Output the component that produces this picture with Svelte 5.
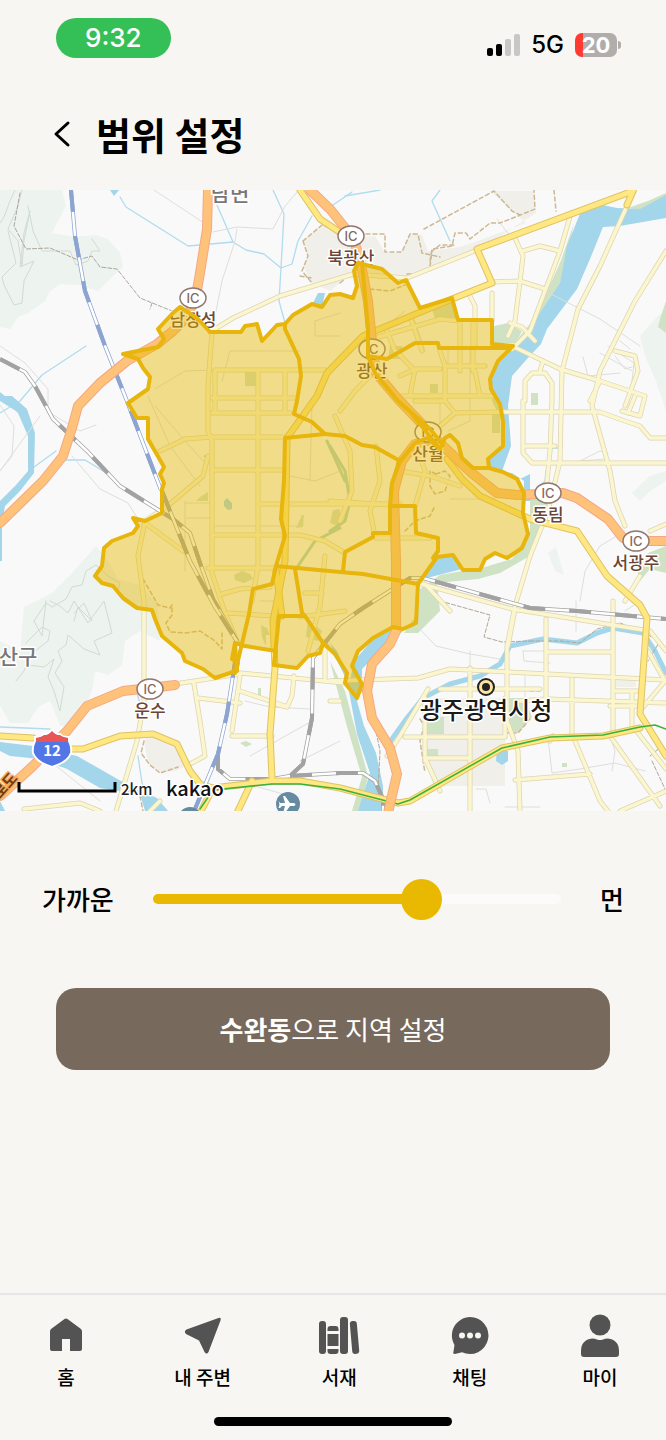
<script>
  let distance = $state(27);
  const maxDistance = 40;
  const filled = $derived(5 + (distance / maxDistance) * 90);

  const hills = [
    'M0 189H62L66 205 58 220 52 232 75 236 96 234 108 238 120 252 123 266 112 276 98 290 78 284 60 283 50 290 45 300 28 312 18 316 10 328 0 326Z',
    'M20 650L24 606 52 592 74 570 96 545 108 560 118 578 140 584 158 604 160 640 140 630 125 640 122 664 108 674 95 670 92 690 82 712 70 730 60 724 50 700 38 706 28 722 10 722 0 704V640Z',
    'M640 335L655 318 666 308V410L656 380 645 355Z',
    'M632 492L650 475 666 470V480L650 490 640 500Z',
    'M548 552L556 546 560 560 564 574 555 570Z'
  ];

  const contours = [
    'M15 189L10 200 4 216 0 222M22 189L18 205 8 228 18 240 22 265 24 240 30 210 24 232 20 266 34 260 24 280 22 302 14 304 4 284 2 276 16 262 8 230',
    'M28 205L33 230 42 250 70 250 76 264 88 260 92 250 100 250 92 238',
    'M34 620L46 602 52 606 66 598 72 586 82 584 86 570 96 564 108 575 120 582 117 592 124 600M74 612L84 602 92 620 78 606 74 620',
    'M34 620L42 635 46 600M26 642L34 634 42 626 50 630 48 640 30 654 24 670 16 680M50 600L60 605 68 612 74 600 88 622 104 600 112 632 94 640 100 654 84 648 68 634 66 644 58 650 62 660 55 672 64 686 60 710 54 690 48 676 54 658 44 666 28 664'
  ];

  const parks = [
    'M574 222L568 250 560 282 545 318 527 352 516 340 534 318 548 288 560 262 572 228Z',
    'M628 207L648 200 666 192V200L640 209Z',
    'M494 325L508 322 522 330 516 342 494 343Z',
    'M531 392H538V404H531Z',
    'M660 318L666 300V332L658 326Z',
    'M530 492L548 502 538 535 528 556 500 572 478 578 437 582 440 610 418 632 404 632 418 612 420 588 440 574 485 566 512 558 530 530Z',
    'M648 552L666 545V572L650 568 640 580 636 566Z',
    'M425 716H444V733H425ZM427 748H438V756H427Z',
    'M507 697H524L532 716 518 732 504 728Z',
    'M562 762h5v4h-5zM258 687h3v8h-3zM240 742l6-2 6 3-6 3z',
    'M330 660L345 690 353 720 368 775 360 810 352 810 362 776 346 722 335 680Z',
    'M245 371H256V385H245ZM200 496L208 491V500H196ZM302 514H304L303 526 296 527ZM333 509L340 508V526L330 522Z',
    'M234 574L242 570 250 573 253 578 244 582 235 579Z',
    'M430 303L450 298 458 318 436 320ZM390 345H402V358H388Z',
    'M492 412L500 410V432H492ZM430 383H438V392H430Z',
    'M490 388L496 400 502 405 502 420 492 400Z',
    'M261 624L267 627 270 634 266 634V645L262 636ZM308 618L322 630 318 640 306 636Z'
  ];

  const plots = [
    'M303 240L322 224 345 238 375 235 385 252 402 252 410 232 422 234 428 250 460 246 478 240 526 222 490 190H534L536 212 520 222 478 250 440 266 407 276 380 274 345 278 330 290 312 282 303 265 308 255Z',
    'M424 697H505V785H434L424 758Z',
    'M144 740L150 733 176 745 186 765 175 770 160 772 148 762Z',
    'M612 679h24v7h-24z'
  ];

  const river = [
    'M583 205L598 203 617 207 640 208 666 194V217L620 225 603 226 590 258 577 288 547 328 541 343 527 358 512 375 508 405 511 445 502 470 520 478 530 473V500L524 500 524 480 512 472 493 470 488 460 503 445 502 403 490 385 493 368 512 348 530 332 538 315 560 282 567 245Z',
    'M437 556L453 554 462 568 427 577 418 583 426 570Z',
    'M394 628L403 630 380 650 362 668 362 690 357 700 364 725 376 752 383 785 383 810H358L370 772 357 733 347 680 335 655 330 642 337 650 350 680 354 660 374 637Z',
    'M0 395L12 395 27 408 35 432 34 472 20 490 5 505 2 522V560H0V500L16 484 28 470 28 435 18 412Z',
    'M0 391L12 401 16 410 0 400Z',
    'M0 741L33 745 77 755 100 768 133 787 157 797 168 810H145L140 793 100 787 67 768 40 758 10 755 0 750Z',
    'M0 800L5 810H0Z',
    'M497 748L508 750V760L502 764 496 760Z',
    'M312 304L318 292 325 292 322 306Z',
    'M110 189H119L114 195Z',
    'M203 455L208 453V458ZM224 500l3-3 5 5v6l-4 1-4-4z'
  ];

  const innerStreams = ['M327 440L345 480M340 527L315 540 298 565', 'M330 445L345 470 350 500 345 520 330 530'];

  const streams = [
    'M120 196L126 206 188 245 233 241 246 249 264 253 281 267 292 263 298 240 312 215',
    'M217 204L233 241M273 189L284 213 281 267 279 300 285 322',
    'M86 345L42 374 20 400M0 412L20 400M34 466L56 450M66 459H85L108 473M330 206L352 191M440 189L432 200 450 240M546 470L545 480 535 490M550 447H560',
    'M380 189L345 195M137 692L142 710 136 740M138 755L142 782 150 805M327 642L345 672M0 726L50 728'
  ];

  const tributary =
    'M387 745L407 717 423 697 450 683 480 675 500 663 510 645 543 638 577 642 597 632 613 627 643 632 655 650 666 672';

  const lanes = [
    'M154 189L204 222M213 231L237 226 273 228 285 205 298 190M237 228L235 240 222 280 215 315',
    'M0 345L25 362 48 388 48 410M40 415L0 470M0 404L14 425 12 455 0 470M50 412L80 430 96 424M72 455L100 488 128 502 138 518',
    'M497 218L510 235M545 290L600 318 640 345M583 356L588 375 620 372M600 352L632 370M608 345L634 362 632 380M620 340L630 348M615 355L625 368 632 366',
    'M580 460L600 450 608 452 606 458 580 460M580 600L585 570 600 545 625 530M412 620L436 645 470 653 500 658M523 650L524 660 550 662M523 650H550',
    'M470 650V670M525 675V700H538M548 737L552 772 580 768 615 762 645 770M476 788H486L490 802M505 806H540M610 735L615 750 612 770M640 600L625 610',
    'M245 700L270 706 310 708M250 755L312 720M50 760L100 800M255 785L290 795 300 806M576 600V630',
    'M230 350H300M230 350L222 380M155 388L185 370 215 369M155 405L185 440 205 462M148 395L170 445 200 485M185 502H212M185 517H212M185 500V570',
    'M312 400L310 480M290 475L315 480 340 470M215 525H300M315 320L340 312M315 320V335H340M260 600H275M340 740L300 760',
    'M440 400V430M448 365V345M470 348V420M395 318L405 310M412 312L425 350M450 498H480M448 430L470 420'
  ];

  const mountainPaths = [
    'M20 192L14 225 26 248 50 247 78 259 92 255 100 266 117 268 140 297 172 310M152 302L150 308',
    'M440 600L490 614 484 636 502 641 530 640M530 640L560 640 580 642 597 628 620 622 640 630 660 640 648 660',
    'M650 755L662 745M652 760L666 790M370 690L374 720 380 750 378 790'
  ];

  const borders = [
    'M303 240L322 224 332 228M303 240L308 255 302 270 312 282M300 275L312 277M340 282L345 278',
    'M345 233H385V251H402L410 233H418L422 252 440 256M430 260L432 248 452 245 455 232H466L470 238 490 222 500 222 518 215 535 208 534 189M424 228L494 190 512 210 520 214M554 189L556 210',
    'M370 288L390 290 405 284M407 273H416M430 265L432 250 440 244 455 244',
    'M143 578L150 590 158 604 170 607 172 604V614L166 622 170 631 185 632 200 630 215 640 222 648 222 632',
    'M436 473L445 470 450 475 445 490 435 493 430 485 430 470ZM405 530L415 520 430 515 435 505',
    'M420 718L424 725 420 740 425 772M505 732L518 732 530 718M530 690H540M144 740L141 752 150 764 160 772 178 766M140 795L143 810'
  ];

  const paleRoads = [
    'M210 331L233 317 280 295 340 277 353 273 407 277 477 249',
    'M212 331L208 385V430L212 440V572L225 612 237 640',
    'M258 369V565L252 600M285 369V410M215 369V410M215 369H325M212 397H295M212 412H290M212 436H284M212 469H284M260 503H400M212 534H300L325 540 345 552M208 567H278',
    'M212 436L185 438 160 450M208 455L203 475 170 503M170 503L145 520 138 555 144 600V700L137 740 122 790 116 810M145 522L183 550',
    'M222 593L240 588 270 586M228 612L275 615M325 555L320 605 308 650M305 592H322M345 610L300 616',
    'M571 212L560 250 545 290 530 330 512 348M515 237L523 255 520 280 515 320 508 335M523 250L540 245 560 250M493 281L520 280 545 288M492 292V320M470 295L475 305V343M510 322L522 326 535 340',
    'M627 205L600 265 578 308 562 370 560 460 548 510 530 555 515 605 507 645V720L518 750 520 810M666 250L635 300 600 370 592 405 610 470 615 500 625 525M512 345L560 368 600 380 645 395 640 415 622 410',
    'M523 400V452L532 462H666M552 400L550 450 545 500M525 445H555M500 411H600L625 420 640 425 650 437H666M525 400V380L532 372H545L552 382V400M540 370L543 360M635 395L628 412M615 350L635 355 638 370 625 405M600 380L590 400',
    'M418 582L512 608 575 618 650 630 666 650M625 600L640 575M650 530L666 523M613 600V730M546 618V700M548 651H613M508 645L515 608',
    'M330 680L418 677 450 668 666 679M520 700L546 698 665 702M572 678V735M428 688L400 735 387 755M470 667V810M440 688H540M425 697V760M405 736H505M425 757H470M425 757L440 790M505 697V735M573 735L600 800 608 810M515 779L590 773M610 735L660 805M635 728L666 768M632 690V728M615 690H637M610 705H640M648 650L665 680 640 710M666 790L620 810',
    'M240 672L345 682M175 683L240 673M194 683L200 720 205 755 190 763M198 697L240 702M240 675L232 730M232 735H272M240 690L285 705M294 675L292 695 287 706 275 703M325 640V680M24 808L80 802 100 810M150 810L160 800',
    'M385 325L395 350M365 340L440 318 460 320M410 315L422 350M460 320V370M473 320V370M440 350L445 365H485M400 375L415 368H440M400 395H495M445 365V400M415 368L410 395M396 350L415 370M475 370L480 395M340 410L355 390 370 375M335 415L350 450 352 490 340 520',
    'M330 500L390 504M376 445L380 480 370 510 375 535M415 400L445 400 455 412 500 411M455 412L440 425M400 470L430 475 460 485M418 450L425 470 415 505M376 537H430',
    'M450 610L425 583M340 700L330 700M550 740L553 735M340 680H330'
  ];

  const yellowRoads = [
    'M633 190L477 248 492 282 452 298 363 335 327 372 317 395 287 437 285 560 273 620 275 667 270 733 272 777',
    'M633 190L627 204',
    'M300 189L320 218 338 230 353 240',
    'M447 458L462 478 480 495 530 518 577 530 607 575 640 604 647 617 640 713 666 755',
    'M0 735L33 737M60 748H83L120 735 153 733 177 743 190 770 200 783 213 787 272 780 300 780 340 787 398 802 410 800 502 747 550 737 603 735 640 727',
    'M252 780L237 812M213 787L200 812M276 570L282 615'
  ];

  const expressways = [
    'M208 189L207 228 200 272 196 295 188 315 173 330 157 343 127 360 100 382 78 405 72 427 63 455 43 480 0 522',
    'M310 189L330 208 353 237 360 258 368 300 372 340 376 372 398 398 443 445 473 473 497 492 517 494 563 492 577 497 608 518 623 537 650 540H666',
    'M427 440L415 443 402 460 394 490 396 560V630L390 643 372 663 367 690 372 717 390 747 397 773 388 812',
    'M175 684L150 687 123 690 87 705 67 730 33 765 0 795'
  ];

  const greyRails = [
    'M0 358L25 371 35 385 53 418 87 450 120 485 160 510 173 518 190 532 200 562 213 598 237 640',
    'M162 490L172 515 190 560 215 606 238 642',
    'M218 753V768L230 778H272L290 775 303 763 312 717 313 657 340 623 363 607 410 577 423 577 487 595 530 607 577 610 666 618',
    'M290 775L340 772 363 772 375 780 383 798V812'
  ];
  const blueRails = ['M71 189L75 235 85 290 105 345 125 395 161 489', 'M236 655L227 713 218 753 195 808'];

  const subway = 'M200 808L213 789 272 783 300 783 340 788 398 803 410 799 502 747 550 736 603 734 640 726 655 724 666 728';

  const region =
    'M358 262L382 268 398 282 406 279 420 307 452 297 458 319H492V343L513 345 498 360 490 378 491 388 500 403 503 420V445L488 458 489 467 503 471 517 478 524 492 523 512 528 533 522 547 507 557 495 552 485 558 480 569H463L453 554 437 556 418 583 416 622 403 628 393 626 373 637 358 650 352 665 362 683 357 697 345 682 347 672 335 653 323 642 320 652 308 655 297 667 274 664 276 650 245 645 235 642 232 658 238 662 236 670 230 672 215 677 203 668 185 660 182 652 162 635 155 618 152 609 137 607 123 597 113 585 102 582 95 575 102 565 104 547 112 540 133 532 138 525 133 517 145 520 162 512V488L164 482 160 473 164 466 148 438V417H137L128 402 148 388 150 376 143 367 138 358 123 353 158 346 164 338 158 328 173 312 180 306 197 317 210 331H241L245 325 257 323 262 340 277 324 285 323 293 314 312 303 322 306 330 294 340 293 353 297 357 285 354 270Z';

  const districts = [
    'M285 323V328L299 358 301 375 297 400 294 413 312 421 325 433 285 437 284 480 281 518 285 535 276 565 272 583 253 588 249 613 235 672',
    'M325 433L345 435 362 444 375 446 400 460 392 482 390 505V532H373V536L345 551 343 570',
    'M276 565L340 571 363 573 418 583M390 505H415L416 532 438 537V550L433 557',
    'M362 262L368 328V355L387 358 415 342H438L439 347H508',
    'M368 355L375 372 398 400 430 428 443 444M412 413L440 448 427 437 415 442 398 463M440 448L445 437 450 434 458 442 462 457 473 467H489',
    'M295 568L302 612 305 615 323 642M305 615H279L274 664M235 642L237 670'
  ];

  const interchanges = [
    { x: 351, y: 235, name: '북광산' },
    { x: 193, y: 297, name: '남장성' },
    { x: 372, y: 348, name: '광산' },
    { x: 428, y: 431, name: '산월' },
    { x: 548, y: 492, name: '동림' },
    { x: 636, y: 540, name: '서광주' },
    { x: 150, y: 688, name: '운수' }
  ];
  const covered = interchanges.slice(0, 4);
  const open = interchanges.slice(4);

  const tabs = [
    { id: 'home', label: '홈' },
    { id: 'near', label: '내 주변' },
    { id: 'library', label: '서재' },
    { id: 'chat', label: '채팅' },
    { id: 'my', label: '마이' }
  ];
</script>

{#snippet interchange(ic)}
  <ellipse cx={ic.x} cy={ic.y} rx="13" ry="10" class="ic" />
  <text x={ic.x} y={ic.y + 5} class="ic-code">IC</text>
  <text x={ic.x} y={ic.y + 28} class="ic-name">{ic.name}</text>
{/snippet}

{#snippet rails(lines, tone)}
  {#each lines as d}
    <path {d} class="rail {tone}" />
    <path {d} class="rail-gap" />
    <path {d} class="rail-dash {tone}" />
  {/each}
{/snippet}

<div class="screen">
  <div class="status">
    <span class="clock">9:32</span>
    <div class="signals">
      <svg class="bars" viewBox="0 0 33 22" aria-hidden="true">
        <rect x="0" y="14" width="6" height="8" rx="2" />
        <rect x="9" y="10" width="6" height="12" rx="2" />
        <rect x="18" y="5" width="6" height="17" rx="2" class="off" />
        <rect x="27" y="0" width="6" height="22" rx="2" class="off" />
      </svg>
      <span class="network">5G</span>
      <div class="battery"><span>20</span></div>
    </div>
  </div>

  <header>
    <button class="back" aria-label="뒤로">
      <svg viewBox="0 0 18 28" aria-hidden="true"><path d="M15 3L3 14 15 25" /></svg>
    </button>
    <h1>범위 설정</h1>
  </header>

  <svg class="map" viewBox="0 189 666 621" role="img" aria-label="지도">
    <rect y="189" width="666" height="622" fill="#f9f9f9" />
    {#each hills as d}<path {d} fill="#edf3ee" />{/each}
    {#each plots as d}<path {d} fill="#f1efea" />{/each}
    {#each contours as d}<path {d} class="line contour" />{/each}
    {#each parks as d}<path {d} fill="#cfe2c4" />{/each}
    {#each streams as d}<path {d} class="line stream" />{/each}
    {#each innerStreams as d}<path {d} class="line inner-stream" />{/each}
    {#each river as d}<path {d} fill="#a3d6ea" />{/each}
    <path d={tributary} class="line tributary" />
    {#each lanes as d}<path {d} class="line lane" />{/each}
    {#each mountainPaths as d}<path {d} class="line trail" />{/each}
    {#each borders as d}<path {d} class="line border" />{/each}
    {#each paleRoads as d}<path {d} class="line pale-edge" />{/each}
    {#each paleRoads as d}<path {d} class="line pale" />{/each}
    {@render rails(greyRails, 'grey')}
    {#each yellowRoads as d}<path {d} class="line yellow-edge" />{/each}
    {#each yellowRoads as d}<path {d} class="line yellow" />{/each}
    <path d={subway} class="line subway" />
    {@render rails(blueRails, 'blue')}
    {#each expressways as d}<path {d} class="line express-edge" />{/each}
    {#each expressways as d}<path {d} class="line express" />{/each}
    {#each covered as ic}{@render interchange(ic)}{/each}

    <path d={region} class="region" />
    {#each districts as d}<path {d} class="district" />{/each}

    {#each open as ic}{@render interchange(ic)}{/each}
    <text x="230" y="200" class="area">남면</text>
    <text x="18" y="663" class="area">산구</text>
    <text x="486" y="718" class="city">광주광역시청</text>
    <circle cx="486" cy="686" r="8" fill="#ffe3a0" stroke="#222" stroke-width="2" />
    <circle cx="486" cy="686" r="4" fill="#222" />

    <path d="M35 736Q42 736 44 733 48 734 52 729 56 734 60 733 62 736 69 736L69 740Q72 746 71 752 68 761 52 766 36 761 33 752 32 746 35 740Z" fill="#5376e6" stroke="#fff" stroke-width="2" />
    <path d="M36 737Q42 736 44 734 48 735 52 730 56 735 60 734 62 736 68 737V741H36Z" fill="#e85554" />
    <text x="52" y="755" class="shield">12</text>
    <text x="9" y="788" class="road-name" transform="rotate(-48 9 788)">로도</text>

    <path d="M19 781V790H115V781" fill="none" stroke="#000" stroke-width="3" />
    <text x="121" y="794" class="scale">2km</text>
    <text x="166" y="795" class="brand">kakao</text>

    <circle cx="288" cy="803" r="12" fill="#668a9f" />
    <path d="M280 802H285L283 795H285L290 802H294Q297 803.500 294 805H290L285 812H283L285 805H282L280 807H278.500L279.500 803.500 278.500 800Z" fill="#fff" />
    <circle cx="190" cy="818" r="12" fill="#668a9f" />
  </svg>

  <main>
    <div class="range">
      <label for="distance">가까운</label>
      <input
        id="distance"
        type="range"
        min="0"
        max={maxDistance}
        bind:value={distance}
        style="--filled: {filled}%"
      />
      <span>먼</span>
    </div>
    <button class="submit"><b>수완동</b>으로 지역 설정</button>
  </main>

  <nav>
    <div class="tabs">
      {#each tabs as tab}
        <a href="#{tab.id}">
          <svg viewBox="0 0 44 44" aria-hidden="true">
            {#if tab.id === 'home'}
              <path d="M20.500 4Q22 3 23.500 4L37 14Q38 15 38 16.500V34Q38 36 36 36H26V24H18V36H8Q6 36 6 34V16.500Q6 15 7 14Z" />
            {:else if tab.id === 'near'}
              <path d="M37.500 3Q40.500 2 39.500 5.500L27.500 37Q25.500 40 23.500 37L18 25.500 5 19Q2.500 16.500 5.500 14.500Z" />
            {:else if tab.id === 'library'}
              <rect x="2" y="6" width="7" height="33" rx="3" />
              <path d="M10.500 16V14Q10.500 11 13.500 11H18.500Q21.500 11 21.500 14V16ZM10.500 19H21.500V31H10.500ZM10.500 34H21.500V36Q21.500 39 18.500 39H13.500Q10.500 39 10.500 36Z" />
              <rect x="23" y="2" width="8" height="37" rx="3" />
              <rect x="34" y="6" width="7" height="33" rx="3" transform="rotate(-5 37 22)" />
            {:else if tab.id === 'chat'}
              <path d="M22 2A18.500 18.500 0 1 1 14 37.200L7 39Q4.500 39 5.500 36.500L6.500 30A18.500 18.500 0 0 1 22 2Z" />
              <circle cx="14" cy="20.500" r="3" class="dot" />
              <circle cx="22" cy="20.500" r="3" class="dot" />
              <circle cx="30" cy="20.500" r="3" class="dot" />
            {:else}
              <circle cx="22" cy="10" r="10.500" />
              <path d="M14 23.500Q17 23.500 19 24.500 22 25.500 25 24.500 27 23.500 30 23.500 41 25 41 36V39Q41 42 38 42H6Q3 42 3 39V36Q3 25 14 23.500Z" />
            {/if}
          </svg>
          <span>{tab.label}</span>
        </a>
      {/each}
    </div>
    <div class="home-indicator"></div>
  </nav>
</div>

<style>
  :global(body) {
    margin: 0;
    background: #f8f6f2;
  }
  .screen {
    display: flex;
    flex-direction: column;
    min-height: 100vh;
    background: #f8f6f2;
    color: #000;
    font-family: 'Noto Sans CJK KR', sans-serif;
  }
  button {
    border: 0;
    padding: 0;
    font-family: inherit;
  }
  .status {
    display: flex;
    justify-content: space-between;
    align-items: flex-start;
    padding: 18px 49px 0 56px;
  }
  .clock {
    padding: 0 29px;
    border-radius: 20px;
    background: #34c056;
    color: #fff;
    font: 500 26px/40px Inter, sans-serif;
  }
  .signals {
    display: flex;
    align-items: center;
    gap: 11px;
    padding-top: 13px;
  }
  .bars {
    width: 33px;
    height: 22px;
  }
  .bars .off {
    fill: #c8c7c5;
  }
  .network {
    font: 500 24px/28px Inter, sans-serif;
  }
  .battery {
    position: relative;
    width: 42px;
    border-radius: 7px;
    background: linear-gradient(90deg, #ff3b30 8px, #afaeac 8px);
    color: #fff;
    font: 700 22px/24px Inter, sans-serif;
    text-align: center;
  }
  .battery::after {
    content: '';
    position: absolute;
    top: 8px;
    right: -4px;
    width: 3px;
    height: 8px;
    border-radius: 0 3px 3px 0;
    background: #afaeac;
  }
  header {
    display: flex;
    align-items: center;
    gap: 25px;
    padding: 46px 53px 27px;
  }
  .back {
    display: flex;
    background: none;
  }
  .back svg {
    width: 18px;
    height: 28px;
    fill: none;
    stroke: #000;
    stroke-width: 3;
    stroke-linecap: round;
    stroke-linejoin: round;
  }
  h1 {
    margin: 0;
    font-size: 38px;
    font-weight: 700;
    line-height: 58px;
  }

  .map {
    display: block;
    width: 100%;
    height: auto;
  }
  .line {
    fill: none;
    stroke-linejoin: round;
    stroke-linecap: round;
  }
  .contour {
    stroke: #d3dad4;
    stroke-width: 1;
  }
  .stream {
    stroke: #b0dcee;
    stroke-width: 1.3;
  }
  .inner-stream {
    stroke: #a9d3c4;
    stroke-width: 3;
  }
  .tributary {
    stroke: #a3d6ea;
    stroke-width: 5;
  }
  .lane {
    stroke: #dededc;
    stroke-width: 1;
  }
  .trail {
    stroke: #b0a69b;
    stroke-width: 1;
    stroke-dasharray: 4 2;
  }
  .border {
    stroke: #cdb893;
    stroke-width: 1.5;
    stroke-dasharray: 4 3;
  }
  .pale-edge {
    stroke: #dcd5b2;
    stroke-width: 5;
  }
  .pale {
    stroke: #fcf6cf;
    stroke-width: 3.5;
  }
  .yellow-edge {
    stroke: #dec364;
    stroke-width: 7;
  }
  .yellow {
    stroke: #ffe782;
    stroke-width: 5;
  }
  .express-edge {
    stroke: #f3a883;
    stroke-width: 10;
  }
  .express {
    stroke: #ffc27b;
    stroke-width: 8;
  }
  .subway {
    stroke: #3cb13c;
    stroke-width: 1.5;
  }
  .rail,
  .rail-gap,
  .rail-dash {
    fill: none;
  }
  .rail {
    stroke-width: 4;
  }
  .rail-gap {
    stroke: #fff;
    stroke-width: 2.5;
  }
  .rail-dash {
    stroke-width: 4;
    stroke-dasharray: 22 24;
  }
  .grey {
    stroke: #a2a2a2;
  }
  .blue {
    stroke: #8ca4d2;
  }
  .region {
    fill: #e7b902;
    fill-opacity: 0.45;
    stroke: #e7b50b;
    stroke-width: 4;
    stroke-linejoin: round;
  }
  .district {
    fill: none;
    stroke: #e7b50b;
    stroke-width: 4;
    stroke-linejoin: round;
    stroke-linecap: round;
  }
  .ic {
    fill: #fff;
    stroke: #927870;
    stroke-width: 1.5;
  }
  .map text {
    text-anchor: middle;
    paint-order: stroke;
    stroke: #fff;
    stroke-width: 3px;
    stroke-linejoin: round;
  }
  .map .ic-code {
    fill: #83695f;
    font: 500 13px Inter, sans-serif;
  }
  .ic-name {
    fill: #6b4637;
    font-size: 17px;
    font-weight: 500;
  }
  .area {
    fill: #777;
    font-size: 21px;
    font-weight: 500;
  }
  .city {
    fill: #1a1a1a;
    font-size: 24px;
    font-weight: 500;
  }
  .map .shield {
    fill: #fff;
    stroke: none;
    font-size: 15px;
    font-weight: 700;
  }
  .map .road-name {
    fill: #6e3b12;
    stroke: #f7a856;
    font-size: 15px;
    font-weight: 700;
  }
  .map .scale {
    fill: #222;
    text-anchor: start;
    font-size: 15px;
    font-weight: 500;
  }
  .map .brand {
    fill: #111;
    text-anchor: start;
    font-size: 20px;
    font-weight: 500;
  }

  main {
    display: flex;
    flex-direction: column;
    gap: 68px;
    padding: 67px 42px 40px;
  }
  .range {
    display: flex;
    align-items: center;
    gap: 39px;
    font-size: 26px;
    font-weight: 500;
    line-height: 42px;
  }
  .range input {
    flex: 1;
    min-width: 0;
    height: 42px;
    margin: 0;
    background: none;
    appearance: none;
  }
  .range input::-webkit-slider-runnable-track {
    height: 10px;
    border-radius: 5px;
    background: linear-gradient(90deg, #e8b900 var(--filled), #fcfbf9 var(--filled));
  }
  .range input::-webkit-slider-thumb {
    width: 41px;
    height: 41px;
    margin-top: -15px;
    border-radius: 50%;
    background: #e8b900;
    appearance: none;
  }
  .submit {
    margin: 0 14px;
    border-radius: 20px;
    background: #776a5c;
    color: #fff;
    font-size: 26px;
    font-weight: 400;
    line-height: 82px;
  }
  .submit b {
    font-weight: 700;
  }

  nav {
    margin-top: auto;
    border-top: 2px solid #e5e6e8;
    padding: 20px 44px 14px;
  }
  .tabs {
    display: flex;
    justify-content: space-between;
  }
  .tabs a {
    display: flex;
    flex-direction: column;
    align-items: center;
    gap: 4px;
    min-width: 42px;
    color: #000;
    font-size: 19px;
    font-weight: 500;
    line-height: 28px;
    text-decoration: none;
  }
  .tabs svg {
    width: 44px;
    height: 44px;
    overflow: visible;
    fill: #535353;
  }
  .tabs .dot {
    fill: #f8f6f2;
  }
  .home-indicator {
    width: 238px;
    height: 9px;
    margin: 26px auto 0;
    border-radius: 5px;
    background: #000;
  }
</style>
